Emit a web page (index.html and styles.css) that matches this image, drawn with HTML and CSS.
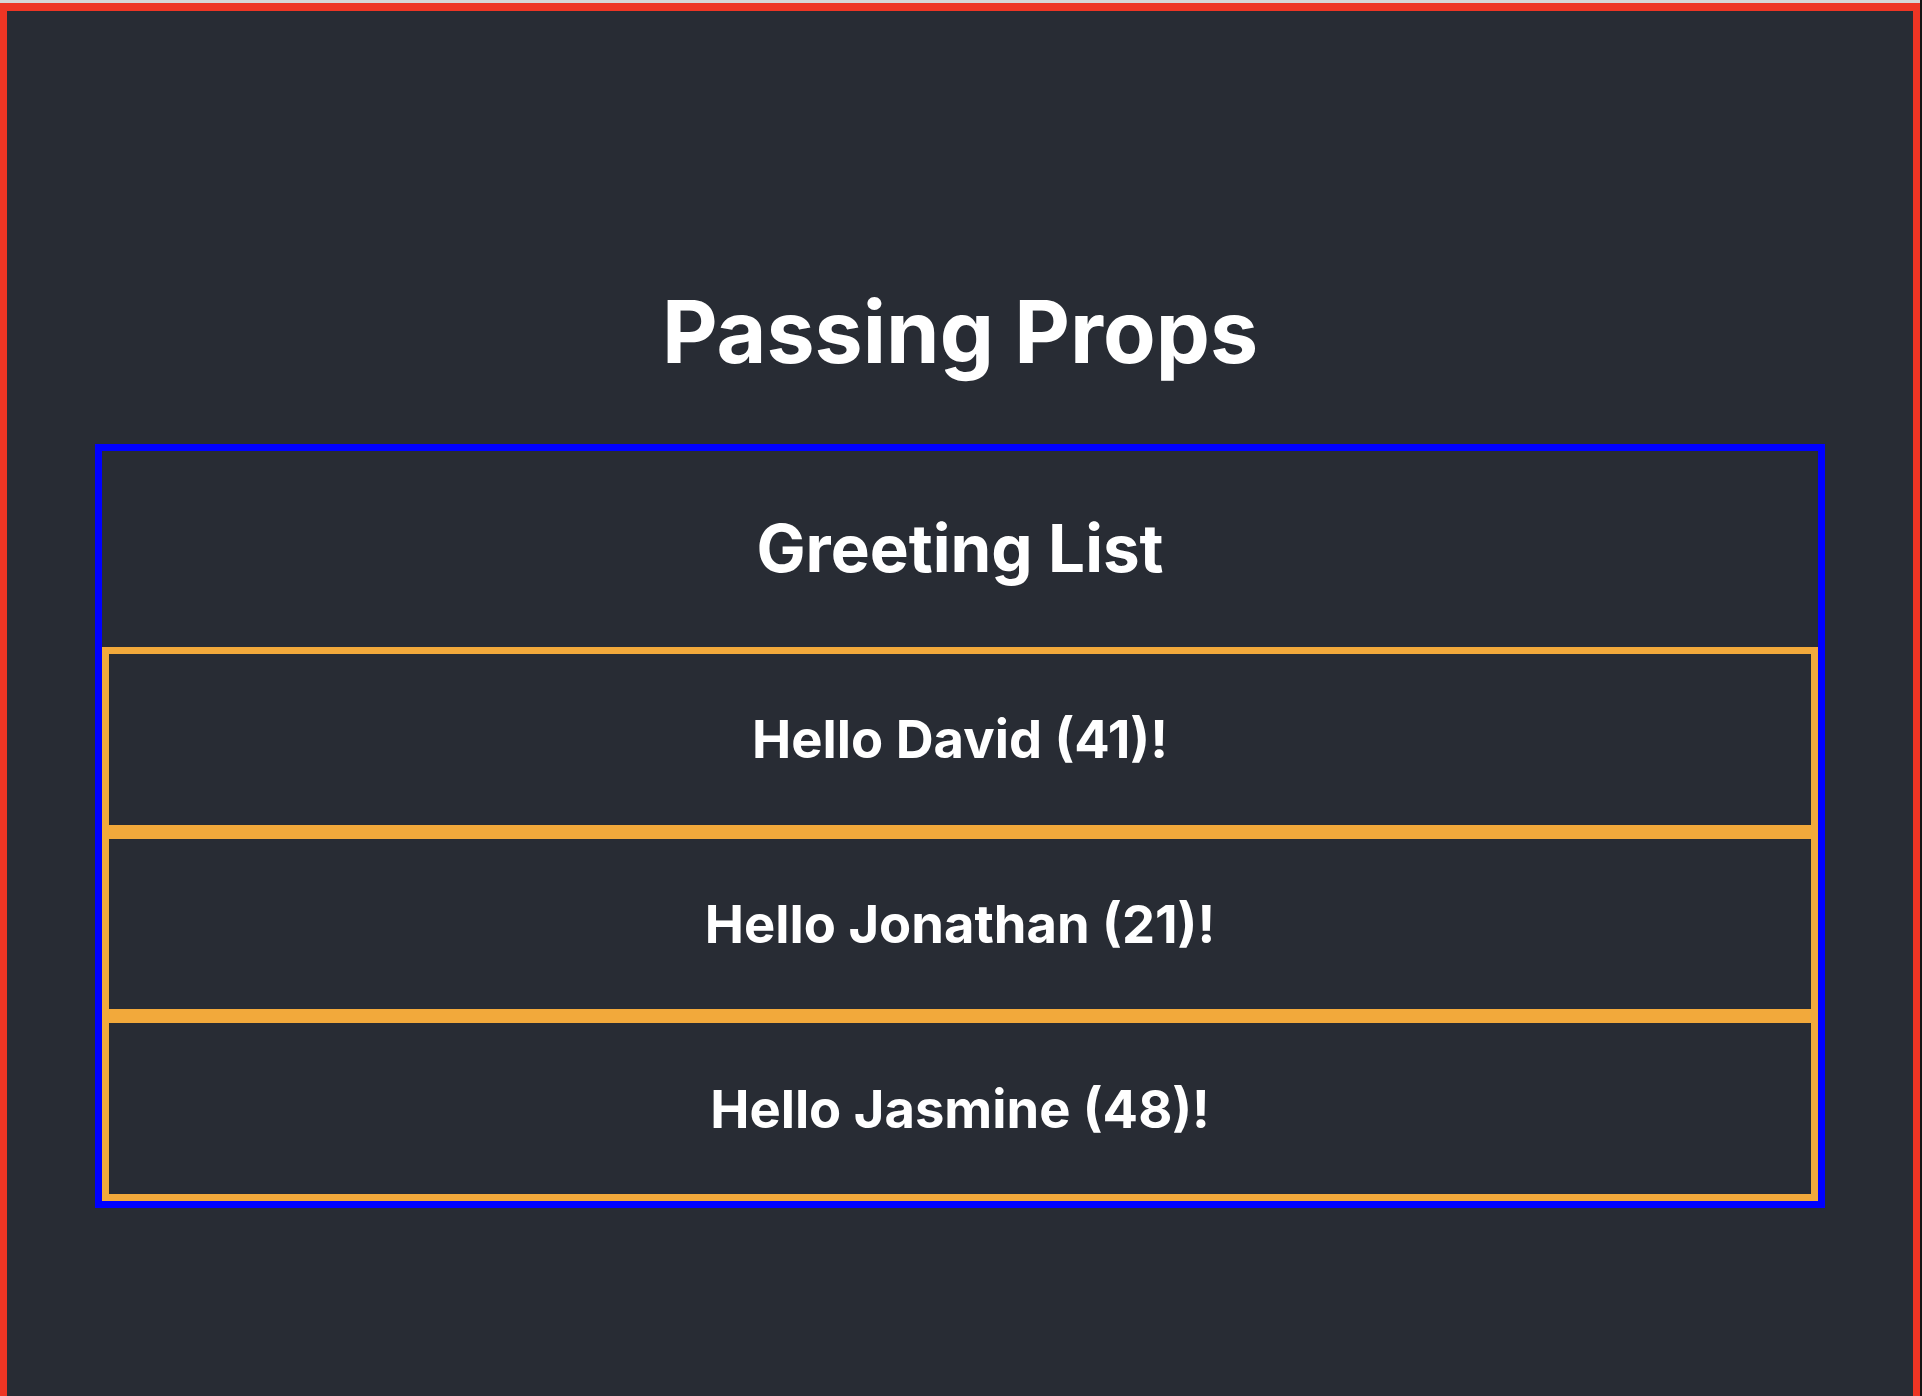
FILE: index.html
```html
<!DOCTYPE html>
<html lang="en">
<head>
<meta charset="utf-8">
<title>Passing Props</title>
<link rel="stylesheet" href="styles.css">
</head>
<body>
<div class="frame">
  <div class="app">
    <h1 class="title">Passing Props</h1>
    <section class="list">
      <h2 class="list-title">Greeting List</h2>
      <div class="greeting"><h3 class="greeting-text">Hello David (41)!</h3></div>
      <div class="greeting"><h3 class="greeting-text">Hello Jonathan (21)!</h3></div>
      <div class="greeting"><h3 class="greeting-text">Hello Jasmine (48)!</h3></div>
    </section>
  </div>
</div>
</body>
</html>
```

FILE: styles.css
```css
html, body {
  margin: 0;
  padding: 0;
  background: #141414;
  overflow: hidden;
}

.frame {
  width: 1920px;
  height: 1396px;
  overflow: hidden;
  background: #d6d6d6;
  padding-top: 3px;
  box-sizing: border-box;
}

.app {
  height: 1420px;
  background: #282c34;
  border: 7px solid #ee3524;
  border-top-width: 8px;
  color: #ffffff;
  font-family: Inter, "Noto Sans", "Liberation Sans", sans-serif;
  text-align: center;
}

.title {
  margin: 0;
  padding-top: 269px;
  font-size: 86px;
  line-height: 104px;
  font-weight: 700;
}

.list {
  margin: 60px 88px 0;
  border: 7px solid #0000ff;
}

.list-title {
  margin: 0;
  padding: 58px 0 59px;
  font-size: 65.5px;
  line-height: 79px;
  font-weight: 700;
}

.greeting {
  box-sizing: border-box;
  height: 184.67px;
  border: 7px solid #f2a93b;
  display: flex;
  align-items: center;
  justify-content: center;
}

.greeting-text {
  margin: 0;
  font-size: 52.5px;
  line-height: 64px;
  font-weight: 700;
}
```
